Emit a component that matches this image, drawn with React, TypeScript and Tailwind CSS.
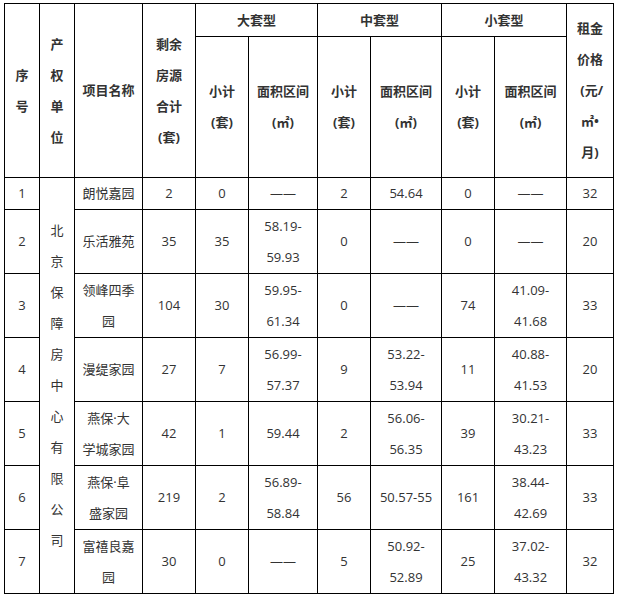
import React from "react"

type Cell = string | string[]

type Row = {
  no: string
  name: Cell
  total: string
  lg: string
  lgArea: Cell
  md: string
  mdArea: Cell
  sm: string
  smArea: Cell
  rent: string
}

const DASH = "——"

const rows: Row[] = [
  { no: "1", name: "朗悦嘉园", total: "2", lg: "0", lgArea: DASH, md: "2", mdArea: "54.64", sm: "0", smArea: DASH, rent: "32" },
  { no: "2", name: "乐活雅苑", total: "35", lg: "35", lgArea: ["58.19-", "59.93"], md: "0", mdArea: DASH, sm: "0", smArea: DASH, rent: "20" },
  { no: "3", name: ["领峰四季", "园"], total: "104", lg: "30", lgArea: ["59.95-", "61.34"], md: "0", mdArea: DASH, sm: "74", smArea: ["41.09-", "41.68"], rent: "33" },
  { no: "4", name: "漫缇家园", total: "27", lg: "7", lgArea: ["56.99-", "57.37"], md: "9", mdArea: ["53.22-", "53.94"], sm: "11", smArea: ["40.88-", "41.53"], rent: "20" },
  { no: "5", name: ["燕保·大", "学城家园"], total: "42", lg: "1", lgArea: "59.44", md: "2", mdArea: ["56.06-", "56.35"], sm: "39", smArea: ["30.21-", "43.23"], rent: "33" },
  { no: "6", name: ["燕保·阜", "盛家园"], total: "219", lg: "2", lgArea: ["56.89-", "58.84"], md: "56", mdArea: "50.57-55", sm: "161", smArea: ["38.44-", "42.69"], rent: "33" },
  { no: "7", name: ["富禧良嘉", "园"], total: "30", lg: "0", lgArea: DASH, md: "5", mdArea: ["50.92-", "52.89"], sm: "25", smArea: ["37.02-", "43.32"], rent: "32" },
]

const colWidths = [35, 35, 68, 53, 53, 69, 53, 71, 53, 72, 47]

function Lines({ value }: { value: Cell }) {
  const list = Array.isArray(value) ? value : [value]
  return (
    <>
      {list.map((line, i) => (
        <React.Fragment key={i}>
          {i > 0 && <br />}
          {line}
        </React.Fragment>
      ))}
    </>
  )
}

const td = "border border-black px-1 py-0 text-center align-middle leading-[31px]"
const th = "border border-black px-1 py-0 text-center align-middle leading-[31px] font-bold"

export default function App() {
  return (
    <div
      className="h-[594px] w-[620px] overflow-hidden bg-white pl-[4px] pt-[3px] text-[13px] text-[#333333]"
      style={{ fontFamily: '"Open Sans", "Noto Sans CJK SC", sans-serif' }}
    >
      <table className="w-[610px] table-fixed border-collapse">
        <colgroup>
          {colWidths.map((w, i) => (
            <col key={i} style={{ width: w }} />
          ))}
        </colgroup>
        <thead>
          <tr className="h-[33px]">
            <th rowSpan={2} className={th}>
              <Lines value={["序", "号"]} />
            </th>
            <th rowSpan={2} className={th}>
              <Lines value={["产", "权", "单", "位"]} />
            </th>
            <th rowSpan={2} className={th}>
              项目名称
            </th>
            <th rowSpan={2} className={th}>
              <Lines value={["剩余", "房源", "合计", "(套)"]} />
            </th>
            <th colSpan={2} className={th}>
              大套型
            </th>
            <th colSpan={2} className={th}>
              中套型
            </th>
            <th colSpan={2} className={th}>
              小套型
            </th>
            <th rowSpan={2} className={th}>
              <Lines value={["租金", "价格", "\u00a0(元/", "㎡•", "月)"]} />
            </th>
          </tr>
          <tr className="h-[141px]">
            {[0, 1, 2].map((k) => (
              <React.Fragment key={k}>
                <th className={th}>
                  <Lines value={["小计", "(套)"]} />
                </th>
                <th className={th}>
                  <Lines value={["面积区间", "(㎡)"]} />
                </th>
              </React.Fragment>
            ))}
          </tr>
        </thead>
        <tbody>
          {rows.map((r, i) => (
            <tr key={r.no} className={i === 0 ? "h-[32px]" : "h-[64px]"}>
              <td className={td}>{r.no}</td>
              {i === 0 && (
                <td rowSpan={7} className={td}>
                  <Lines value={"北京保障房中心有限公司".split("")} />
                </td>
              )}
              <td className={td}>
                <Lines value={r.name} />
              </td>
              <td className={td}>{r.total}</td>
              <td className={td}>{r.lg}</td>
              <td className={td}>
                <Lines value={r.lgArea} />
              </td>
              <td className={td}>{r.md}</td>
              <td className={td}>
                <Lines value={r.mdArea} />
              </td>
              <td className={td}>{r.sm}</td>
              <td className={td}>
                <Lines value={r.smArea} />
              </td>
              <td className={td}>{r.rent}</td>
            </tr>
          ))}
          <tr className="h-[32px]">
            {colWidths.map((_, i) => (
              <td key={i} className={td}>
                &nbsp;
              </td>
            ))}
          </tr>
        </tbody>
      </table>
    </div>
  )
}
